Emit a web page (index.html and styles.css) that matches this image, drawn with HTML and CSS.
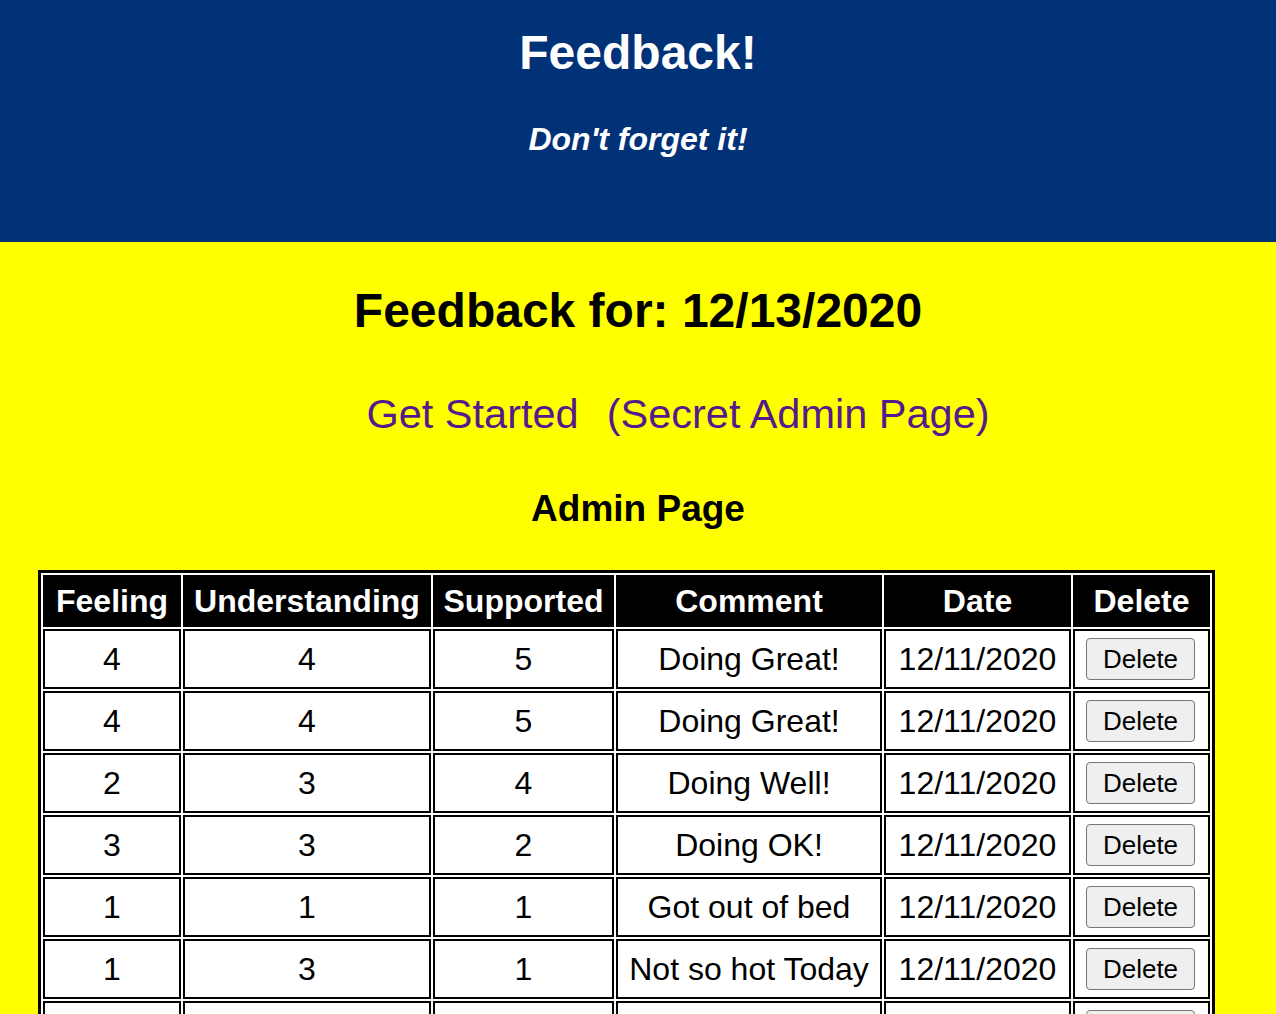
FILE: index.html
```html
<!DOCTYPE html>
<html lang="en">
<head>
<meta charset="utf-8">
<title>Feedback!</title>
<link rel="stylesheet" href="styles.css">
</head>
<body>
<header class="app-header">
  <h1 class="app-title">Feedback!</h1>
  <h4 class="app-subtitle">Don't forget it!</h4>
</header>
<main class="content">
  <h2 class="day-title">Feedback for: 12/13/2020</h2>
  <nav class="nav-links">
    <a class="nav-link" href="#start">Get Started</a>
    <a class="nav-link" href="#admin">(Secret Admin Page)</a>
  </nav>
  <h3 class="section-title">Admin Page</h3>
  <table class="feedback-table">
    <thead>
      <tr>
        <th class="col-feeling">Feeling</th>
        <th class="col-understanding">Understanding</th>
        <th class="col-supported">Supported</th>
        <th class="col-comment">Comment</th>
        <th class="col-date">Date</th>
        <th class="col-delete">Delete</th>
      </tr>
    </thead>
    <tbody>
      <tr><td>4</td><td>4</td><td>5</td><td>Doing Great!</td><td>12/11/2020</td><td class="cell-delete"><button class="del-btn">Delete</button></td></tr>
      <tr><td>4</td><td>4</td><td>5</td><td>Doing Great!</td><td>12/11/2020</td><td class="cell-delete"><button class="del-btn">Delete</button></td></tr>
      <tr><td>2</td><td>3</td><td>4</td><td>Doing Well!</td><td>12/11/2020</td><td class="cell-delete"><button class="del-btn">Delete</button></td></tr>
      <tr><td>3</td><td>3</td><td>2</td><td>Doing OK!</td><td>12/11/2020</td><td class="cell-delete"><button class="del-btn">Delete</button></td></tr>
      <tr><td>1</td><td>1</td><td>1</td><td>Got out of bed</td><td>12/11/2020</td><td class="cell-delete"><button class="del-btn">Delete</button></td></tr>
      <tr><td>1</td><td>3</td><td>1</td><td>Not so hot Today</td><td>12/11/2020</td><td class="cell-delete"><button class="del-btn">Delete</button></td></tr>
      <tr><td>5</td><td>5</td><td>5</td><td>Awesome!</td><td>12/11/2020</td><td class="cell-delete"><button class="del-btn">Delete</button></td></tr>
      <tr><td>3</td><td>4</td><td>3</td><td>Pretty good</td><td>12/11/2020</td><td class="cell-delete"><button class="del-btn">Delete</button></td></tr>
    </tbody>
  </table>
</main>
</body>
</html>
```

FILE: styles.css
```css
html, body {
  margin: 0;
  padding: 0;
}

body {
  background: #ffff00;
  font-family: "Liberation Sans", Arial, Helvetica, sans-serif;
  font-size: 32px;
  color: #000;
}

.app-header {
  background: #013277;
  color: #fff;
  height: 242px;
  box-sizing: border-box;
  padding-top: 25px;
  text-align: center;
}

.app-title {
  margin: 0;
  font-size: 48px;
  font-weight: bold;
  line-height: 55px;
}

.app-subtitle {
  margin: 41px 0 0;
  font-size: 32px;
  font-weight: bold;
  font-style: italic;
  line-height: 37px;
}

.content {
  padding-top: 41px;
  padding-bottom: 40px;
}

.day-title {
  margin: 0;
  text-align: center;
  font-size: 48px;
  font-weight: bold;
  line-height: 55px;
}

.nav-links {
  margin-top: 52px;
  padding-left: 80px;
  font-size: 41.5px;
  line-height: 47px;
  display: flex;
  justify-content: center;
  gap: 28px;
}

.nav-link {
  color: #551a8b;
  text-decoration: none;
}

.section-title {
  margin: 50px 0 0;
  text-align: center;
  font-size: 37px;
  font-weight: bold;
  line-height: 43px;
}

.feedback-table {
  margin: 40px 0 0 38px;
  background: #fff;
  border: 3px solid #000;
  border-spacing: 2px;
  font-size: 32px;
}

.feedback-table th {
  background: #000;
  color: #fff;
  border: 2px solid #000;
  padding: 5px 8px;
  line-height: 38px;
  font-weight: bold;
  white-space: nowrap;
}

.feedback-table td {
  border: 2px solid #000;
  padding: 7px 8px;
  text-align: center;
  line-height: 37px;
  white-space: nowrap;
}

.feedback-table .col-feeling { width: 118px; }
.feedback-table .col-understanding { width: 228px; }
.feedback-table .col-supported { width: 161px; }
.feedback-table .col-comment { width: 246px; }
.feedback-table .col-date { width: 167px; }
.feedback-table .col-delete { width: 117px; }

.feedback-table .cell-delete {
  text-align: left;
  padding-left: 11px;
}

.del-btn {
  font-family: "Liberation Sans", Arial, Helvetica, sans-serif;
  font-size: 26px;
  height: 42px;
  width: 109px;
  padding: 0;
  color: #000;
  background: #efefef;
  border: 1px solid #767676;
  border-radius: 4px;
  vertical-align: middle;
}
```
